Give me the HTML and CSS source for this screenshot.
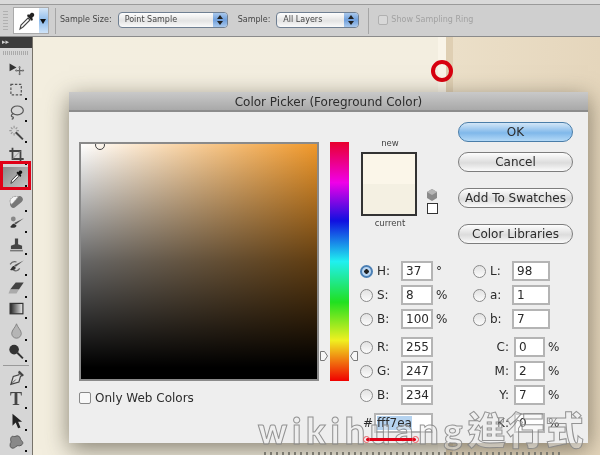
FILE: index.html
```html
<!DOCTYPE html>
<html>
<head>
	<title>Color Picker</title>
	<link rel="stylesheet" href="styles.css">
</head>
<body>
	<div class="screen">
		<div class="top-strip"></div>

		<div class="options">
			<div class="grip"></div>
			<div class="preset">
				<div class="preset-icon">
					<svg width="20" height="20" viewBox="0 0 20 20"><path d="M3 18l1-4 7-7 2 2-7 7z" fill="#fff" stroke="#444" stroke-width="1.1"/><path d="M10 5l5 5 1-2-1-1 2-2c1-2-1-4-3-3l-2 2-1-1z" fill="#222"/></svg>
				</div>
				<div class="preset-arrow"></div>
			</div>
			<div class="opt-sep"></div>
			<span class="opt-label">Sample Size:</span>
			<div class="select select-size"><span>Point Sample</span><i class="stepper"></i></div>
			<span class="opt-label label-sample">Sample:</span>
			<div class="select select-layers"><span>All Layers</span><i class="stepper"></i></div>
			<div class="opt-sep sep-ring"></div>
			<div class="ring-box"></div>
			<span class="ring-label">Show Sampling Ring</span>
		</div>

		<div class="workspace">
			<div class="toolbox">
				<div class="tool-head">&#9656;&#9656;</div>
				<div class="tool-grip"></div>

				<div class="tool plain"><svg viewBox="0 0 22 20"><path d="M2 3l9 5-9 5z" fill="#333"/><path d="M15 8v8M11 12h8" stroke="#666" stroke-width="1.6"/><path d="M15 6l-2 2h4zM15 18l-2-2h4zM9 12l2-2v4zM21 12l-2-2v4z" fill="#666"/></svg></div>
				<div class="tool"><svg viewBox="0 0 20 20"><rect x="3" y="3" width="13" height="13" fill="none" stroke="#555" stroke-width="1.5" stroke-dasharray="3 2"/></svg></div>
				<div class="tool"><svg viewBox="0 0 20 20"><ellipse cx="11" cy="8" rx="7.5" ry="5.5" fill="none" stroke="#555" stroke-width="1.5"/><path d="M6 12c-3 1-3 4-1 4s1 3-1 3" fill="none" stroke="#555" stroke-width="1.5"/></svg></div>
				<div class="tool"><svg viewBox="0 0 20 20"><path d="M9 9l9 9" stroke="#444" stroke-width="2.4"/><path d="M7 1v3M7 10v3M1 7h3M10 7h3M3 3l2 2M11 3L9 5M3 11l2-2" stroke="#999" stroke-width="1.5"/></svg></div>
				<div class="tool"><svg viewBox="0 0 20 20"><path d="M5 1v14h14M1 5h14v14" fill="none" stroke="#444" stroke-width="2.2"/><path d="M5 15L15 5" stroke="#888"/></svg></div>
				<div class="tool tool-active"><svg viewBox="0 0 20 20"><path d="M3 18l1-4 7-7 2 2-7 7z" fill="#eee" stroke="#333" stroke-width="1.1"/><path d="M10 5l5 5 1-2-1-1 2-2c1-2-1-4-3-3l-2 2-1-1z" fill="#111"/></svg></div>

				<div class="tool"><svg viewBox="0 0 20 20"><rect x="1" y="6" width="18" height="8" rx="4" transform="rotate(-40 10 10)" fill="#777"/><path d="M4 13L12 4c-3-2-7-1-9 2s-1 5 1 7z" fill="#f4f4f4" stroke="#888" stroke-dasharray="2 1"/></svg></div>
				<div class="tool"><svg viewBox="0 0 20 20"><path d="M19 4L9 12l-2-2z" fill="#555"/><path d="M7 11c-3 0-3 3-5 4 3 2 8 1 8-2z" fill="#333"/><circle cx="6" cy="5" r="3" fill="#888"/></svg></div>
				<div class="tool"><svg viewBox="0 0 20 20"><path d="M8 2h4v7l5 2v4H3v-4l5-2z" fill="#444"/><rect x="2" y="16" width="16" height="2" fill="#777"/></svg></div>
				<div class="tool"><svg viewBox="0 0 20 20"><path d="M19 3L9 11l-2-2z" fill="#555"/><path d="M7 10c-3 0-3 3-5 5 4 1 7 0 7-3z" fill="#333"/><path d="M2 8c2-3 5-4 8-3M6 15c3 2 6 1 8-2" fill="none" stroke="#666" stroke-width="1.4"/></svg></div>
				<div class="tool"><svg viewBox="0 0 20 20"><path d="M9 3h10l-6 9H2z" fill="#444"/><path d="M2 12h11l-3 5H0z" fill="#aaa"/></svg></div>
				<div class="tool"><svg viewBox="0 0 20 20"><rect x="2" y="3" width="16" height="13" fill="url(#toolgrad)" stroke="#333" stroke-width="1.5"/><defs><linearGradient id="toolgrad"><stop offset="0" stop-color="#222"/><stop offset="1" stop-color="#eee"/></linearGradient></defs></svg></div>
				<div class="tool"><svg viewBox="0 0 20 20"><path d="M10 1c1 4 6 8 6 12a6 6 0 0 1-12 0c0-4 5-8 6-12z" fill="#b5b5b5" stroke="#777"/></svg></div>
				<div class="tool tool-last"><svg viewBox="0 0 20 20"><circle cx="7" cy="7" r="6" fill="#333"/><path d="M11 11l7 7" stroke="#333" stroke-width="2.4"/></svg></div>

				<div class="tool-line"></div>

				<div class="tool"><svg viewBox="0 0 20 20"><path d="M14 2l4 4-3 2-2 7-10 3 3-10 7-2z" fill="#ddd" stroke="#444" stroke-width="1.5"/><path d="M3 18l6-6" stroke="#444"/><path d="M13 1l6 6-2 1-5-5z" fill="#444"/></svg></div>
				<div class="tool tool-type">T</div>
				<div class="tool"><svg viewBox="0 0 20 20"><path d="M5 1v15l4-4 3 7 3-1-3-7h5z" fill="#222"/></svg></div>
				<div class="tool"><svg viewBox="0 0 20 20"><path d="M6 3c3 1 4-2 7 0s1 3 3 5 3 4 0 6-4-1-7 2-7 2-7-2 2-3 1-5 0-7 3-6z" fill="#888" stroke="#555" stroke-width="1.2"/></svg></div>
				<div class="tool-line"></div>
			</div>

			<div class="canvas">
				<div class="mark-circle"></div>

				<div class="dialog">
					<div class="dialog-title">Color Picker (Foreground Color)</div>
					<div class="dialog-body">
						<div class="field-col">
							<div class="color-field"><div class="field-marker"></div></div>
							<label class="web-only"><i class="check"></i>Only Web Colors</label>
						</div>

						<div class="hue-bar">
							<svg class="hue-arrow hue-left" viewBox="0 0 8 10"><path d="M.5.5h4l3 4.500-3 4.500h-4z" fill="#f6f6f6" stroke="#777"/></svg>
							<svg class="hue-arrow hue-right" viewBox="0 0 8 10"><path d="M7.500.5h-4l-3 4.500 3 4.500h4z" fill="#f6f6f6" stroke="#777"/></svg>
						</div>

						<div class="right-col">
							<div class="upper">
								<div class="swatch-block">
									<div class="swatch-text">new</div>
									<div class="swatch-row">
										<div class="swatch"><div class="swatch-new"></div><div class="swatch-old"></div></div>
										<div class="swatch-side">
											<svg width="12" height="12" viewBox="0 0 12 12"><path d="M6 0l5 3v6l-5 3-5-3V3z" fill="#8a8a8a"/><path d="M6 6l5-3-5-3-5 3z" fill="#b5b5b5"/></svg>
											<div class="web-box"></div>
										</div>
									</div>
									<div class="swatch-text text-current">current</div>
								</div>
								<div class="buttons">
									<button class="btn btn-ok">OK</button>
									<button class="btn">Cancel</button>
									<button class="btn btn-gap">Add To Swatches</button>
									<button class="btn btn-gap">Color Libraries</button>
								</div>
							</div>

							<div class="values">
								<div class="values-left">
									<div class="val-group">
										<div class="val-row"><i class="radio radio-on"></i><span class="val-label">H:</span><span class="val">37</span><span class="val-unit">°</span></div>
										<div class="val-row"><i class="radio"></i><span class="val-label">S:</span><span class="val">8</span><span class="val-unit">%</span></div>
										<div class="val-row"><i class="radio"></i><span class="val-label">B:</span><span class="val">100</span><span class="val-unit">%</span></div>
									</div>
									<div class="val-group">
										<div class="val-row"><i class="radio"></i><span class="val-label">R:</span><span class="val">255</span></div>
										<div class="val-row"><i class="radio"></i><span class="val-label">G:</span><span class="val">247</span></div>
										<div class="val-row"><i class="radio"></i><span class="val-label">B:</span><span class="val">234</span></div>
									</div>
									<div class="val-row hex-row"><span class="hash">#</span><span class="val val-hex"><b>fff7ea</b></span></div>
								</div>
								<div class="values-right">
									<div class="val-group">
										<div class="val-row"><i class="radio"></i><span class="val-label lab">L:</span><span class="val val-lab">98</span></div>
										<div class="val-row"><i class="radio"></i><span class="val-label lab">a:</span><span class="val val-lab">1</span></div>
										<div class="val-row"><i class="radio"></i><span class="val-label lab">b:</span><span class="val val-lab">7</span></div>
									</div>
									<div class="val-group">
										<div class="val-row"><span class="cmyk-label">C:</span><span class="val val-cmyk">0</span><span class="val-unit">%</span></div>
										<div class="val-row"><span class="cmyk-label">M:</span><span class="val val-cmyk">2</span><span class="val-unit">%</span></div>
										<div class="val-row"><span class="cmyk-label">Y:</span><span class="val val-cmyk">7</span><span class="val-unit">%</span></div>
									</div>
									<div class="val-row hex-row"><span class="cmyk-label">K:</span><span class="val val-cmyk">0</span><span class="val-unit">%</span></div>
								</div>
							</div>
						</div>
					</div>
				</div>
			</div>
		</div>

		<div class="tool-mark"></div>
		<div class="watermark">wikihuang<span class="wm-cjk">進行式</span></div>
		<div class="wm-line"></div>
		<div class="hex-mark"></div>
	</div>
</body>
</html>
```

FILE: styles.css
```css
html, body {
	margin: 0;
	padding: 0;
	background-color: #d0d0d0;
}

.screen {
	position: relative;
	width: 600px;
	height: 455px;
	overflow: hidden;
	font-family: "DejaVu Sans", sans-serif;
	color: #333;
	filter: blur(0.45px);
}

.top-strip {
	height: 4px;
	background-color: #d9d9d9;
	border-bottom: 1px solid #9a9a9a;
}

/* options bar */
.options {
	display: flex;
	align-items: center;
	height: 31px;
	background-color: #cfcfcf;
	border-bottom: 1px solid #8b8b8b;
	font-size: 8px;
}

.grip {
	width: 5px;
	height: 20px;
	margin-left: 3px;
	background: repeating-linear-gradient(#b0b0b0 0 1px, transparent 1px 3px);
}

.preset {
	display: flex;
	width: 34px;
	height: 25px;
	margin-left: 5px;
	border: 1px solid #aaa;
	background-color: #fff;
}

.preset-icon {
	display: flex;
	align-items: center;
	justify-content: center;
	flex: 1;
}

.preset-arrow {
	position: relative;
	width: 9px;
	background: linear-gradient(#d5e6f7, #8ebcec 50%, #cfe3f7);
}

.preset-arrow::after {
	content: "";
	position: absolute;
	left: 1px;
	top: 11px;
	border: 3.5px solid transparent;
	border-top: 5px solid #111;
}

.opt-sep {
	width: 1px;
	height: 26px;
	margin-left: 6px;
	background-color: #a5a5a5;
}

.opt-label {
	margin-left: 4px;
	margin-bottom: 2px;
	color: #444;
}

.select {
	display: flex;
	align-items: center;
	justify-content: space-between;
	height: 14px;
	margin-left: 6px;
	margin-bottom: 2px;
	padding-left: 6px;
	border: 1px solid #6f7f92;
	border-radius: 4px;
	background: linear-gradient(#fdfdfd, #e4e4e4 55%, #fafafa);
	color: #444;
}

.select-size {
	width: 102px;
}

.select-layers {
	width: 75px;
}

.label-sample {
	margin-left: 10px;
}

.stepper {
	position: relative;
	width: 14px;
	height: 14px;
	border-radius: 0 3px 3px 0;
	background: linear-gradient(#a9c8ec, #6f9fdc 50%, #a9c8ec);
}

.stepper::before, .stepper::after {
	content: "";
	position: absolute;
	left: 4px;
	border: 3px solid transparent;
}

.stepper::before {
	top: -1px;
	border-bottom: 4px solid #222;
}

.stepper::after {
	bottom: -1px;
	border-top: 4px solid #222;
}

.sep-ring {
	margin-left: 9px;
}

.ring-box {
	width: 8px;
	height: 8px;
	margin-left: 9px;
	margin-bottom: 2px;
	border: 1px solid #b0b0b0;
	border-radius: 2px;
	background-color: #d8d8d8;
}

.ring-label {
	margin-left: 3px;
	margin-bottom: 2px;
	color: #a2a2a2;
}

/* toolbox and canvas */
.workspace {
	display: flex;
	height: 419px;
}

.toolbox {
	flex: none;
	width: 32px;
	background-color: #d6d6d6;
	border-right: 1px solid #77736a;
}

.tool-head {
	height: 11px;
	background-color: #3b3b3b;
	color: #cfcfcf;
	font-size: 7px;
	line-height: 11px;
	padding-left: 2px;
}

.tool-grip {
	height: 4px;
	margin: 3px 3px 3px;
	background: repeating-linear-gradient(90deg, #aaa 0 1px, transparent 1px 2px);
}

.tool {
	position: relative;
	display: flex;
	align-items: center;
	justify-content: center;
	height: 21.5px;
}

.tool svg {
	width: 17px;
	height: 16px;
}

.tool::after {
	content: "";
	position: absolute;
	right: 5px;
	bottom: 1px;
	width: 2px;
	height: 2px;
	background-color: #111;
}

.plain::after {
	display: none;
}

.tool-active {
	margin: 1px 3px 3px 3px;
	background: linear-gradient(135deg, #888, #c8c8c8);
}

.tool-active::after {
	right: 2px;
}

.tool-line {
	height: 1px;
	margin: 2px 3px 1px;
	background-color: #999;
}

.tool-type {
	font-family: "Liberation Serif", serif;
	font-size: 18px;
	font-weight: bold;
	color: #444;
}

.canvas {
	position: relative;
	flex: 1;
	background: linear-gradient(90deg, #f3eedf 0, #f3eee0 405px, #f9f4e8 405px, #f9f4e8 413px, #dfcfb3 413px, #dfcfb3 420px, #ebdfc8 420px, #e5d6bc 100%);
}

.mark-circle {
	position: absolute;
	left: 398px;
	top: 23px;
	width: 14px;
	height: 14px;
	border: 4px solid #d8000f;
	border-radius: 50%;
}

.tool-mark {
	position: absolute;
	left: 0;
	top: 161px;
	width: 25px;
	height: 23px;
	border: 3px solid #e00016;
}

/* dialog */
.dialog {
	position: absolute;
	left: 36px;
	top: 55px;
	width: 519px;
	height: 351px;
	background-color: #eeeeee;
	box-shadow: 0 6px 22px rgba(60, 55, 40, 0.6);
}

.dialog-title {
	height: 20px;
	background: linear-gradient(#c9c9c9, #a9a9a9);
	border-bottom: 2px solid #8c8c8c;
	box-sizing: border-box;
	text-align: center;
	font-size: 12px;
	line-height: 20px;
	color: #2c2c2c;
}

.dialog-body {
	display: flex;
	padding-left: 10px;
}

.field-col {
	margin-top: 30px;
}

.color-field {
	position: relative;
	box-sizing: border-box;
	width: 240px;
	height: 239px;
	overflow: hidden;
	border: 2px solid #8a8a8a;
	background: linear-gradient(transparent, rgba(0, 0, 0, 0.6) 50%, #000 95%), linear-gradient(90deg, #fff, #f0982a);
}

.field-marker {
	position: absolute;
	left: 14px;
	top: -4px;
	width: 8px;
	height: 8px;
	border: 1px solid #444;
	border-radius: 50%;
}

.web-only {
	display: flex;
	align-items: center;
	margin-top: 10px;
	font-size: 12px;
	color: #2c2c2c;
}

.check {
	width: 10px;
	height: 10px;
	margin-right: 4px;
	border: 1px solid #888;
	border-radius: 2px;
	background-color: #f8f8f8;
}

.hue-bar {
	position: relative;
	flex: none;
	width: 19px;
	height: 239px;
	margin: 30px 11px 0 11px;
	background: linear-gradient(#e8002d, #f000e8 17%, #1010e0 33%, #20f0f0 50%, #20e020 67%, #f0f020 83%, #f00000);
}

.hue-arrow {
	position: absolute;
	top: 209px;
	width: 8px;
	height: 10px;
}

.hue-left {
	left: -10px;
}

.hue-right {
	right: -9px;
}

.right-col {
	flex: 1;
}

.upper {
	display: flex;
	height: 149px;
}

.swatch-block {
	width: 98px;
	padding-top: 26px;
	box-sizing: border-box;
}

.swatch-text {
	width: 58px;
	margin-left: 1px;
	text-align: center;
	font-size: 8.5px;
	line-height: 11px;
	color: #444;
}

.text-current {
	margin-top: 2px;
}

.swatch-row {
	display: flex;
	align-items: flex-end;
	margin-top: 3px;
	margin-left: 1px;
}

.swatch {
	width: 52px;
	height: 60px;
	border: 2px solid #333;
}

.swatch-new {
	height: 50%;
	background-color: #fbf6e9;
}

.swatch-old {
	height: 50%;
	background-color: #f4f0e2;
}

.swatch-side {
	display: flex;
	flex-direction: column;
	align-items: center;
	gap: 2px;
	margin-left: 9px;
	margin-bottom: 2px;
}

.web-box {
	width: 9px;
	height: 9px;
	border: 1px solid #333;
	background-color: #fff;
}

.buttons {
	display: flex;
	flex-direction: column;
	width: 115px;
	padding-top: 10px;
}

.btn {
	height: 20px;
	margin: 0 0 10px 0;
	padding: 0;
	border: 1px solid #7d7d7d;
	border-radius: 10px;
	background: linear-gradient(#fdfdfd, #dcdcdc 55%, #fafafa);
	font-family: "DejaVu Sans", sans-serif;
	font-size: 12px;
	color: #2c2c2c;
}

.btn-ok {
	border-color: #4a7da8;
	background: linear-gradient(#d3e6f7, #80b8ea 55%, #b3d9f7);
}

.btn-gap {
	margin: 6px 0 10px 0;
}

.values {
	display: flex;
}

.values-left {
	width: 113px;
}

.val-group {
	display: flex;
	flex-direction: column;
	gap: 4px;
	margin-bottom: 8px;
}

.val-row {
	display: flex;
	align-items: center;
	height: 20px;
	font-size: 12px;
	color: #2a2a2a;
}

.radio {
	box-sizing: border-box;
	width: 13px;
	height: 13px;
	margin-right: 4px;
	border: 1.5px solid #8a8a8a;
	border-radius: 50%;
	background: linear-gradient(#e2e2e2, #fbfbfb);
}

.radio-on {
	border: 2px solid #4b7fb4;
	background: radial-gradient(#222 0 2px, #b9d5f1 2.5px);
}

.val-label {
	width: 24px;
}

.lab {
	width: 22px;
}

.val {
	box-sizing: border-box;
	width: 32px;
	height: 20px;
	padding-left: 3px;
	border: 2px solid #b4b4b4;
	background-color: #fff;
	line-height: 16px;
}

.val-lab {
	width: 38px;
}

.val-cmyk {
	width: 31px;
}

.val-unit {
	margin-left: 3px;
}

.hash {
	width: 14px;
	padding-left: 3px;
	box-sizing: border-box;
}

.val-hex {
	width: 59px;
	padding-left: 1px;
}

.val-hex b {
	font-weight: normal;
	background-color: #b5d3f0;
}

.cmyk-label {
	width: 36px;
	margin-right: 5px;
	text-align: right;
}

.hex-mark {
	position: absolute;
	left: 366px;
	top: 438px;
	width: 50px;
	height: 3px;
	background-color: #e00016;
	border-radius: 2px;
}

.hex-mark::before, .hex-mark::after {
	content: "";
	position: absolute;
	top: -2px;
	width: 5px;
	height: 5px;
	border: 1px solid #e85a60;
	border-radius: 50%;
	box-sizing: content-box;
}

.hex-mark::before {
	left: -3px;
}

.hex-mark::after {
	right: -3px;
}

.watermark {
	position: absolute;
	left: 258px;
	top: 409px;
	font-family: "Lato", "Noto Sans CJK TC", sans-serif;
	font-size: 36px;
	font-weight: 900;
	letter-spacing: 4.8px;
	line-height: 38px;
	white-space: nowrap;
	color: rgba(240, 240, 240, 0.45);
	-webkit-text-stroke: 1px rgba(130, 130, 130, 0.85);
}

.wm-cjk {
	font-family: "Noto Sans CJK TC", sans-serif;
	font-size: 38px;
	letter-spacing: 1px;
}

.wm-line {
	position: absolute;
	left: 264px;
	top: 452px;
	width: 300px;
	height: 3px;
	background: repeating-linear-gradient(90deg, #7c7a70 0 2px, transparent 2px 6px);
}
```
